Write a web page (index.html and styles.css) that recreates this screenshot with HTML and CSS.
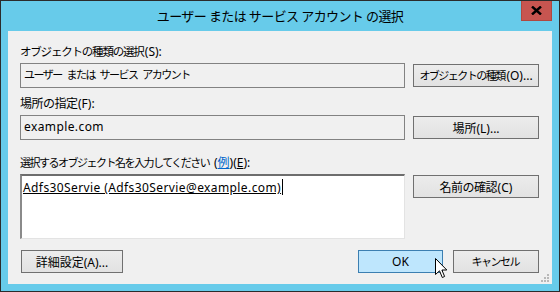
FILE: index.html
```html
<!DOCTYPE html>
<html lang="ja">
<head>
    <meta charset="UTF-8">
    <title>ユーザー または サービス アカウント の選択</title>
    <link rel="stylesheet" href="styles.css">
</head>
<body>

<div class="window">
    <div class="titlebar">
        <span class="title">ユーザー または サービス アカウント の選択</span>
        <button class="close" aria-label="閉じる">
            <svg width="11" height="9" viewBox="0 0 11 9"><path d="M1 0.5 L10 8.5 M10 0.5 L1 8.5" stroke="#000" stroke-width="2.4"/></svg>
        </button>
    </div>

    <div class="client">
        <div class="label first"><span class="jp">オブジェクトの種類の選択</span>(S):</div>
        <div class="box"><span class="kn">ユーザー</span> <span class="kn">または</span> <span class="kn">サービス</span> <span class="kn">アカウント</span></div>
        <button class="btn side"><span class="kn">オブジェクトの種類</span>(O)...</button>

        <div class="label second"><span class="kj">場所の指定</span>(F):</div>
        <div class="box latin">example.com</div>
        <button class="btn side">場所(L)...</button>

        <div class="label third"><span class="kn">選択するオブジェクト名を入力してください</span> (<a class="link" href="#">例</a>)(<u>E</u>):</div>
        <div class="names"><u>Adfs30Servie (Adfs30Servie@example.com)</u><span class="caret"></span></div>
        <button class="btn side top"><span class="kj">名前の確認</span>(C)</button>

        <div class="actions">
            <button class="btn detail">詳細設定(A)...</button>
            <span class="spacer"></span>
            <button class="btn ok">OK</button>
            <button class="btn cancel"><span class="kn">キャンセル</span></button>
        </div>

        <svg class="grip" width="8" height="8" viewBox="0 0 8 8">
            <rect x="6" y="0" width="2" height="2" fill="#b8b8b8"/>
            <rect x="3" y="3" width="2" height="2" fill="#b8b8b8"/>
            <rect x="6" y="3" width="2" height="2" fill="#b8b8b8"/>
            <rect x="0" y="6" width="2" height="2" fill="#b8b8b8"/>
            <rect x="3" y="6" width="2" height="2" fill="#b8b8b8"/>
            <rect x="6" y="6" width="2" height="2" fill="#b8b8b8"/>
        </svg>
    </div>

    <svg class="pointer" width="13" height="21" viewBox="0 0 13 21">
        <path d="M0.5 0.5 L0.5 16.5 L4.5 12.8 L7.3 19.5 L9.6 18.5 L6.9 12 L11.8 12 Z" fill="#fff" stroke="#000" stroke-width="1" stroke-linejoin="miter"/>
    </svg>
</div>

</body>
</html>
```

FILE: styles.css
```css
* { box-sizing: border-box; }
body { margin: 0; font-family: "Noto Sans", "Noto Sans CJK JP", sans-serif; font-size: 12px; color: #000; background: #fff; }

.window { position: relative; width: 560px; height: 292px; border: 1px solid #2b2b2b; background: #67cbea; padding: 0 7px 7px 7px; display: flex; flex-direction: column; }
.titlebar { height: 30px; display: flex; align-items: center; justify-content: center; position: relative; }
.title { font-size: 13px; color: #000; margin-top: -1px; letter-spacing: -0.6px; }
.close { position: absolute; top: 0; right: 0; width: 31px; height: 20px; border: 1px solid #b04840; border-top: 0; background: #c75550; padding: 0; display: flex; align-items: center; justify-content: center; }

.client { position: relative; flex: 1; background: #f0f0f0; padding: 13px 13px 0 12px; display: grid; grid-template-columns: 385px 126px; column-gap: 8px; align-content: start; }

/* Meiryo UI kana are much narrower than Noto's, so shrink the Japanese runs */
.jp { font-size: 11.5px; letter-spacing: -1.2px; margin-right: 1.2px; }
.kn { font-size: 11px; letter-spacing: -1.5px; margin-right: 1.5px; }
.kj { letter-spacing: -0.5px; margin-right: 0.5px; }

.label { grid-column: 1 / 3; height: 16px; line-height: 16px; margin-bottom: 3px; white-space: nowrap; }
.label.second { margin-top: 8px; }
.label.third { margin-top: 15px; }
.link { color: #0066cc; }

.box { height: 25px; border: 1px solid #828282; background: #f0f0f0; padding: 0 3px; line-height: 22px; white-space: nowrap; }
.latin { letter-spacing: 0.4px; }

.btn { font-family: inherit; font-size: 12px; color: #000; height: 23px; padding: 0; border: 1px solid #707070; background: linear-gradient(#ececec, #e2e2e2); white-space: nowrap; }
.side { align-self: center; }
.side.top { align-self: start; margin-top: 1px; }

.names { height: 65px; background: #fff; border-top: 2px solid #6d6d6d; border-left: 2px solid #8a8a8a; border-right: 1px solid #e3e3e3; border-bottom: 1px solid #e3e3e3; padding: 3px 1px; line-height: 17px; letter-spacing: 0.4px; white-space: nowrap; }
.caret { display: inline-block; width: 1px; height: 16px; background: #000; vertical-align: -3px; margin-left: 1px; }

.actions { grid-column: 1 / 3; display: flex; margin-top: 11px; gap: 10px; }
.spacer { flex: 1; }
.detail { width: 102px; margin-left: 1px; }
.ok { width: 85px; background: #bee6fd; border-color: #3c7fb1; }
.cancel { width: 86px; }

.grip { position: absolute; right: 3px; bottom: 2px; }
.pointer { position: absolute; left: 434px; top: 257px; }
```
